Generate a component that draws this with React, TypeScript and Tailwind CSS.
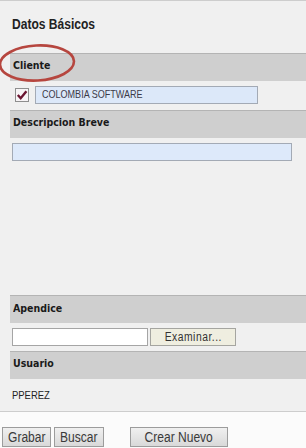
import React from "react";

// the source capture is squeezed horizontally, so text is narrowed a bit
function Sq({ children, c = "origin-left" }: { children: React.ReactNode; c?: string }) {
  return <span className={`inline-block scale-x-[0.86] whitespace-nowrap ${c}`}>{children}</span>;
}

function Bar({ label }: { label: string }) {
  return (
    <div
      className="ml-[10px] flex h-[28px] items-center border-t border-[#b4b4b4] bg-[#cfcfcf] pb-[2px] pl-[3px] text-[11px] font-bold text-[#1a1a1a]"
      style={{ fontFamily: '"DejaVu Sans", Verdana, sans-serif' }}
    >
      <Sq>{label}</Sq>
    </div>
  );
}

function Btn({ label, w }: { label: string; w: string }) {
  return (
    <button
      className={`flex h-[20px] items-center justify-center border border-[#9c9c9c] bg-gradient-to-b from-[#f0f0f0] to-[#d9d9d9] text-[14px] leading-none text-[#3a3a3a] ${w}`}
    >
      <Sq c="origin-center">{label}</Sq>
    </button>
  );
}

export default function App() {
  return (
    <div
      className="relative h-[448px] w-[306px] overflow-hidden bg-[#fbfbfb]"
      style={{ fontFamily: '"Liberation Sans", Arial, sans-serif' }}
    >
      <div className="flex h-[412px] flex-col border-t border-b border-[#cdcdcd] bg-[#f0f0f0]">
        <div className="h-[52px] pl-[12px] pt-[16px] text-[14px] font-bold leading-none text-[#222]">
          <Sq>Datos Básicos</Sq>
        </div>

        <Bar label="Cliente" />
        <div className="flex h-[29px] items-center gap-[6px] pl-[15px]">
          <div className="flex h-[14px] w-[14px] items-center justify-center border border-[#8e8e8e] bg-[#f7f4f6]">
            <svg viewBox="0 0 12 12" className="h-[12px] w-[12px]">
              <path d="M1.8 6 L4.7 9.2 L10.4 2.2" fill="none" stroke="#6b1430" strokeWidth="2.4" />
            </svg>
          </div>
          <div className="flex h-[18px] w-[223px] items-center border border-[#a3aab5] bg-[#dce8f9] pl-[6px] text-[10.5px] text-[#3b3a48]">
            <Sq>COLOMBIA SOFTWARE</Sq>
          </div>
        </div>

        <Bar label="Descripcion Breve" />
        <div className="h-[158px] pl-[12px] pt-[5px]">
          <div className="h-[18px] w-[280px] border border-[#a3aab5] bg-[#dde9fa]" />
        </div>

        <Bar label="Apendice" />
        <div className="flex h-[28px] items-center gap-[2px] pl-[12px]">
          <div className="h-[18px] w-[136px] border border-[#a5a5a5] bg-white" />
          <div className="flex h-[18px] w-[86px] items-center justify-center border border-[#a5a5a0] bg-[#efeee0] text-[12px] tracking-[0.6px] text-[#333]">
            <Sq c="origin-center">Examinar...</Sq>
          </div>
        </div>

        <Bar label="Usuario" />
        <div className="flex h-[32px] items-center pl-[12px] text-[11px] text-[#222]">
          <Sq>PPEREZ</Sq>
        </div>
      </div>

      <div className="mt-[15px] flex items-center pl-[2px]">
        <Btn label="Grabar" w="w-[49px]" />
        <div className="w-[3px]" />
        <Btn label="Buscar" w="w-[50px]" />
        <div className="w-[26px]" />
        <Btn label="Crear Nuevo" w="w-[98px]" />
      </div>

      <svg className="pointer-events-none absolute left-0 top-0" width="306" height="448">
        <ellipse
          cx="37"
          cy="63"
          rx="37"
          ry="17.5"
          fill="none"
          stroke="#b6463f"
          strokeWidth="2.6"
          transform="rotate(-3 37 63)"
        />
      </svg>
    </div>
  );
}
